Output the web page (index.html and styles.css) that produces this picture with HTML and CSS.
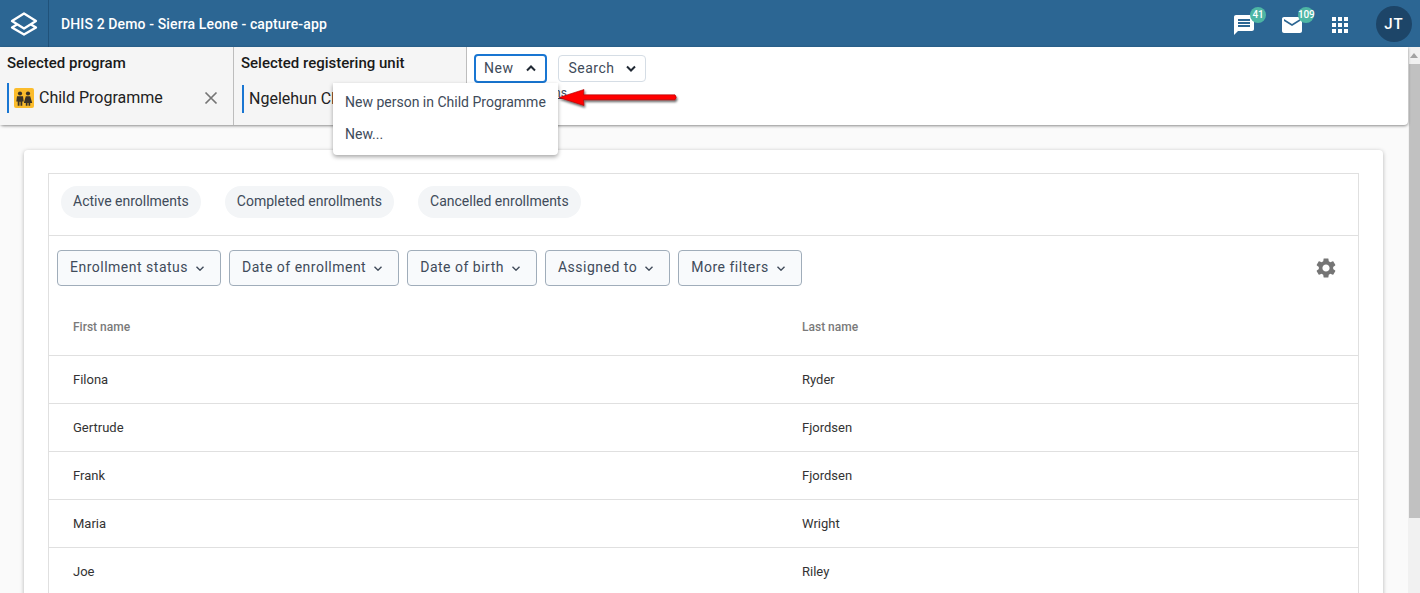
FILE: index.html
```html
<!DOCTYPE html>
<html lang="en">
<head>
    <meta charset="UTF-8">
    <meta name="viewport" content="width=device-width, initial-scale=1.0">
    <title>DHIS 2 Demo - Sierra Leone - capture-app</title>
    <link rel="stylesheet" href="styles.css">
</head>
<body>
    <header class="topbar">
        <div class="logo">
            <svg width="28" height="24" viewBox="0 0 28 24" fill="none" stroke="#fff" stroke-width="2.300" stroke-linejoin="round">
                <path d="M14 1.500 L26 9 L14 16.500 L2 9 Z"/>
                <path d="M7 12.500 L2 15.500 L14 22.500 L26 15.500 L21 12.500"/>
            </svg>
        </div>
        <div class="app-title">DHIS 2 Demo - Sierra Leone - capture-app</div>
        <div class="top-icons">
            <div class="top-icon">
                <svg width="24" height="24" viewBox="0 0 24 24" fill="#fff"><path d="M20 2H4c-1.1 0-1.99.9-1.99 2L2 22l4-4h14c1.1 0 2-.9 2-2V4c0-1.1-.9-2-2-2zm-2 12H6v-2h12v2zm0-3H6V9h12v2zm0-3H6V6h12v2z"/></svg>
                <span class="badge">41</span>
            </div>
            <div class="top-icon">
                <svg width="24" height="24" viewBox="0 0 24 24" fill="#fff"><path d="M20 4H4c-1.1 0-1.99.9-1.99 2L2 18c0 1.1.9 2 2 2h16c1.1 0 2-.9 2-2V6c0-1.1-.9-2-2-2zm0 4l-8 5-8-5V6l8 5 8-5v2z"/></svg>
                <span class="badge">109</span>
            </div>
            <div class="top-icon">
                <svg width="24" height="24" viewBox="0 0 24 24" fill="#fff"><path d="M4 8h4V4H4v4zm6 12h4v-4h-4v4zm-6 0h4v-4H4v4zm0-6h4v-4H4v4zm6 0h4v-4h-4v4zm6-10v4h4V4h-4zm-6 4h4V4h-4v4zm6 6h4v-4h-4v4zm0 6h4v-4h-4v4z"/></svg>
            </div>
            <div class="avatar">JT</div>
        </div>
    </header>

    <div class="page">
        <div class="main">
            <div class="context-bar">
                <div class="selector">
                    <div class="selector-label">Selected program</div>
                    <div class="selector-value">
                        <svg class="program-icon" width="20" height="20" viewBox="0 0 20 20">
                            <rect width="20" height="20" rx="2" fill="#fbbc2c"/>
                            <g fill="#3a3226">
                                <circle cx="6" cy="5.500" r="2.100"/>
                                <path d="M3 8.300h6l.7 5.200H8.300v4.200H6.500v-4H5.500v4H3.700v-4.200H2.300z"/>
                                <circle cx="14" cy="5.500" r="2.100"/>
                                <path d="M11.800 8.300h4.400l2 6.700h-2v2.700h-1.700V15h-1v2.700h-1.700V15h-2z"/>
                            </g>
                        </svg>
                        <span>Child Programme</span>
                        <svg class="clear-icon" width="14" height="14" viewBox="0 0 14 14" fill="none" stroke="#757575" stroke-width="1.700"><path d="M1.500 1.500l11 11M12.500 1.500l-11 11"/></svg>
                    </div>
                </div>
                <div class="selector selector-unit">
                    <div class="selector-label">Selected registering unit</div>
                    <div class="selector-value"><span>Ngelehun CHC</span></div>
                </div>
                <div class="actions">
                    <div class="action-buttons">
                        <div class="action-btn action-btn-open">New
                            <svg width="10" height="7" viewBox="0 0 10 7" fill="none" stroke="#212934" stroke-width="2"><path d="M1 5.500l4-4 4 4"/></svg>
                        </div>
                        <div class="action-btn">Search
                            <svg width="10" height="7" viewBox="0 0 10 7" fill="none" stroke="#212934" stroke-width="2"><path d="M1 1.500l4 4 4-4"/></svg>
                        </div>
                    </div>
                    <a class="more-link">More actions</a>
                </div>

                <div class="dropdown">
                    <div class="dropdown-item">New person in Child Programme</div>
                    <div class="dropdown-item">New...</div>
                </div>
                <svg class="callout-arrow" width="124" height="30" viewBox="0 0 124 30">
                    <defs>
                        <filter id="arrowShadow" x="-10%" y="-30%" width="120%" height="170%">
                            <feDropShadow dx="1" dy="2" stdDeviation="1.200" flood-color="#000" flood-opacity="0.6"/>
                        </filter>
                    </defs>
                    <path d="M1 14.500 L26 6.500 L25.500 11.800 L117 11.800 Q119.500 14.300 117 16.800 L25.500 16.800 L26 22.500 Z" fill="#f00" stroke="#a00" stroke-width="0.600" filter="url(#arrowShadow)"/>
                </svg>
            </div>

            <div class="card">
                <div class="list-box">
                    <div class="chips">
                        <span class="chip">Active enrollments</span>
                        <span class="chip">Completed enrollments</span>
                        <span class="chip">Cancelled enrollments</span>
                    </div>
                    <div class="filters">
                        <div class="filter">Enrollment status <svg width="8" height="5" viewBox="0 0 8 5" fill="none" stroke="#404b5a" stroke-width="1.400"><path d="M.5.700L4 4.200 7.500.700"/></svg></div>
                        <div class="filter">Date of enrollment <svg width="8" height="5" viewBox="0 0 8 5" fill="none" stroke="#404b5a" stroke-width="1.400"><path d="M.5.700L4 4.200 7.500.700"/></svg></div>
                        <div class="filter">Date of birth <svg width="8" height="5" viewBox="0 0 8 5" fill="none" stroke="#404b5a" stroke-width="1.400"><path d="M.5.700L4 4.200 7.500.700"/></svg></div>
                        <div class="filter">Assigned to <svg width="8" height="5" viewBox="0 0 8 5" fill="none" stroke="#404b5a" stroke-width="1.400"><path d="M.5.700L4 4.200 7.500.700"/></svg></div>
                        <div class="filter">More filters <svg width="8" height="5" viewBox="0 0 8 5" fill="none" stroke="#404b5a" stroke-width="1.400"><path d="M.5.700L4 4.200 7.500.700"/></svg></div>
                        <svg class="gear" width="24" height="24" viewBox="0 0 24 24" fill="#757575"><path d="M19.140 12.940c.04-.3.06-.61.06-.94 0-.32-.02-.64-.07-.94l2.030-1.580c.18-.14.23-.41.12-.61l-1.920-3.320c-.12-.22-.37-.29-.59-.22l-2.390.96c-.5-.38-1.030-.7-1.620-.94l-.36-2.540c-.04-.24-.24-.41-.48-.41h-3.840c-.24 0-.43.17-.47.41l-.36 2.540c-.59.24-1.130.57-1.620.94l-2.390-.96c-.22-.08-.47 0-.59.22L2.740 8.870c-.12.21-.08.47.12.61l2.030 1.580c-.05.3-.09.63-.09.94s.02.64.07.94l-2.030 1.580c-.18.14-.23.41-.12.61l1.920 3.320c.12.22.37.29.59.22l2.390-.96c.5.38 1.030.7 1.620.94l.36 2.540c.05.24.24.41.48.41h3.840c.24 0 .44-.17.47-.41l.36-2.540c.59-.24 1.130-.56 1.620-.94l2.390.96c.22.08.47 0 .59-.22l1.920-3.320c.12-.22.07-.47-.12-.61l-2.010-1.580zM12 15.600c-1.980 0-3.600-1.620-3.600-3.600s1.620-3.600 3.600-3.600 3.600 1.620 3.600 3.600-1.620 3.600-3.600 3.600z"/></svg>
                    </div>
                    <div class="row row-head"><div>First name</div><div>Last name</div></div>
                    <div class="row"><div>Filona</div><div>Ryder</div></div>
                    <div class="row"><div>Gertrude</div><div>Fjordsen</div></div>
                    <div class="row"><div>Frank</div><div>Fjordsen</div></div>
                    <div class="row"><div>Maria</div><div>Wright</div></div>
                    <div class="row"><div>Joe</div><div>Riley</div></div>
                </div>
            </div>
        </div>
        <div class="scrollbar">
            <div class="scroll-up"></div>
            <div class="scroll-thumb"></div>
        </div>
    </div>
</body>
</html>
```

FILE: styles.css
```css
* { box-sizing: border-box; }
html, body { height: 100%; }
body { margin: 0; overflow: hidden; font-family: Roboto, "Liberation Sans", sans-serif; color: #212934; background: #fafafa; display: flex; flex-direction: column; }

.topbar { height: 47px; flex: none; display: flex; align-items: center; background: #2c6693; color: #fff; }
.logo { width: 49px; height: 47px; display: flex; align-items: center; justify-content: center; border-right: 1px solid #20527a; }
.app-title { margin-left: 12px; font-size: 14px; font-weight: 500; letter-spacing: 0.13px; }
.top-icons { margin-left: auto; display: flex; align-items: center; padding-right: 8px; }
.top-icon { position: relative; width: 24px; height: 24px; margin: 3px 24px 0 0; }
.top-icon svg { display: block; }
.badge { position: absolute; left: 18px; top: -6px; width: 16px; height: 16px; border-radius: 8px; background: #4db6a4; color: #fff; font-size: 10px; font-weight: 500; letter-spacing: -0.2px; line-height: 16px; text-align: center; }
.avatar { width: 36px; height: 36px; margin-top: 1px; border-radius: 50%; background: #1d4568; font-size: 15px; font-weight: 500; letter-spacing: 1px; line-height: 36px; text-align: center; }

.page { flex: 1; min-height: 0; display: flex; }
.main { flex: 1; min-width: 0; }

.context-bar { position: relative; height: 78px; display: flex; background: #fff; border-radius: 0 0 4px 4px; box-shadow: 0 1px 3px rgba(0,0,0,0.45); }
.selector { width: 234px; padding: 7px 0 0 7px; background: #f5f5f5; border-right: 1px solid #bdbdbd; }
.selector-label { font-size: 15px; font-weight: 500; line-height: 18px; color: #1a1a1a; }
.selector-value { position: relative; display: flex; align-items: center; height: 30px; margin-top: 11px; padding: 0 0 2px 5px; border-left: 2px solid #1976d2; font-size: 16px; color: #212121; }
.selector-unit { width: 233px; }
.selector-unit .selector-value { height: 28px; margin: 13px 0 0 1px; }
.program-icon { margin: 2px 5px 0 0; flex: none; }
.clear-icon { position: absolute; right: 15px; top: 8px; }

.actions { padding: 7px 0 0 7px; }
.action-buttons { display: flex; align-items: flex-start; gap: 11px; }
.action-btn { display: flex; align-items: center; gap: 12px; height: 27px; margin-top: 1px; padding: 0 9px 1px; border: 1px solid #d5dde5; border-radius: 4px; font-size: 14px; letter-spacing: 0.5px; color: #404b5a; }
.action-btn svg { margin-top: 1px; }
.action-btn-open { gap: 13px; height: 29px; margin-top: 0; padding: 0 9px 1px 8px; border: 2px solid #1976d2; }
.more-link { display: block; margin-top: 3px; padding-left: 23px; font-size: 12px; color: #404b5a; text-decoration: underline; }

.dropdown { position: absolute; left: 333px; top: 36px; width: 225px; padding: 3px 0 5px; background: #fff; border-radius: 0 0 4px 4px; box-shadow: 0 2px 4px rgba(0,0,0,0.35); z-index: 2; }
.dropdown-item { height: 32px; padding-left: 12px; font-size: 14px; line-height: 32px; color: #404b5a; }
.callout-arrow { position: absolute; left: 558px; top: 36px; z-index: 3; }

.card { margin: 25px 25px 0 24px; padding: 23px 24px 0; height: 600px; background: #fff; border-radius: 4px; box-shadow: 0 1px 4px rgba(0,0,0,0.28); }
.list-box { border: 1px solid #e0e0e0; }

.chips { display: flex; gap: 24px; height: 62px; padding: 12px 12px 0; border-bottom: 1px solid #e0e0e0; }
.chip { height: 32px; padding: 0 12px; border-radius: 16px; background: #f3f5f7; font-size: 14px; line-height: 30px; color: #404b5a; }

.filters { display: flex; align-items: flex-start; gap: 8px; height: 70px; padding: 14px 8px 0; }
.filter { display: flex; align-items: center; gap: 8px; height: 36px; padding: 0 16px 2px 12px; border: 1px solid #a0adba; border-radius: 4px; background: #f8fafc; font-size: 14px; letter-spacing: 0.5px; color: #404b5a; }
.filter svg { margin-top: 2px; }
.gear { margin: 6px 12px 0 auto; }

.row { display: grid; grid-template-columns: 729px 1fr; align-items: center; height: 48px; padding-left: 24px; border-bottom: 1px solid #e0e0e0; font-size: 13px; color: #333; }
.row-head { height: 50px; padding-bottom: 8px; font-size: 12px; font-weight: 500; color: #7a7a7a; }

.scrollbar { width: 12px; flex: none; background: #f1f1f1; }
.scroll-up { width: 0; margin: 6px auto 0; border: 4px solid transparent; border-top: 0; border-bottom: 5px solid #a3a3a3; }
.scroll-thumb { height: 454px; margin: 6px 0 0 1px; background: #c1c1c1; }
```
